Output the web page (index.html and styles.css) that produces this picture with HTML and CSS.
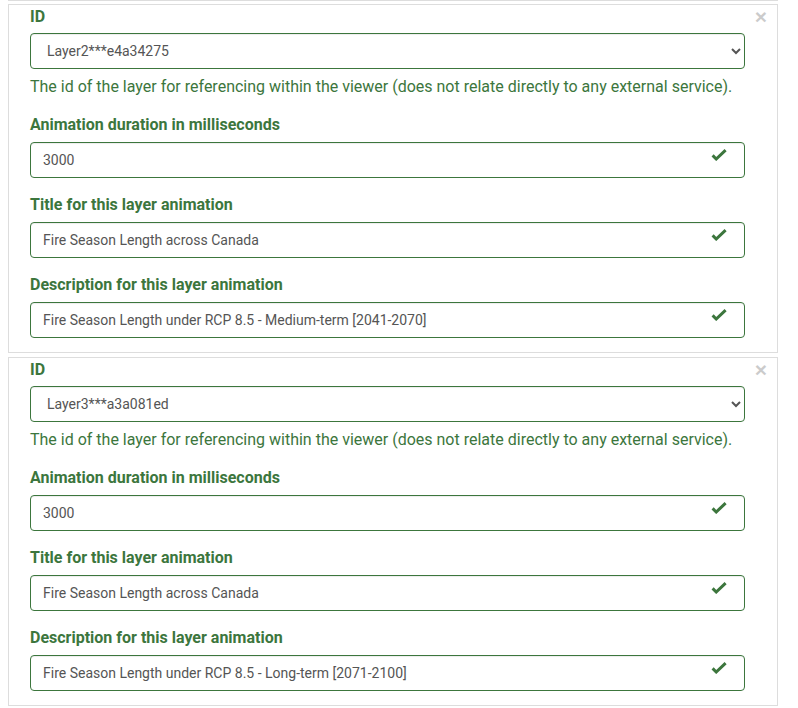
FILE: index.html
```html
<!DOCTYPE html>
<html>
<head>
<meta charset="utf-8">
<link rel="stylesheet" href="styles.css">
</head>
<body>
<div class="list">
  <div class="prev"></div>

  <div class="panel">
    <span class="close">×</span>
    <div class="group first">
      <label class="lbl">ID</label>
      <select class="ctl sel"><option>Layer2***e4a34275</option></select>
      <p class="help">The id of the layer for referencing within the viewer (does not relate directly to any external service).</p>
    </div>
    <div class="group">
      <label class="lbl">Animation duration in milliseconds</label>
      <div class="field">
        <input class="ctl" type="text" value="3000">
        <svg class="ok" viewBox="0 0 16 12" width="16" height="12"><path d="M1.6 6.4 L5.2 10 L14.6 1.2" fill="none" stroke="#3c763d" stroke-width="3"/></svg>
      </div>
    </div>
    <div class="group">
      <label class="lbl">Title for this layer animation</label>
      <div class="field">
        <input class="ctl" type="text" value="Fire Season Length across Canada">
        <svg class="ok" viewBox="0 0 16 12" width="16" height="12"><path d="M1.6 6.4 L5.2 10 L14.6 1.2" fill="none" stroke="#3c763d" stroke-width="3"/></svg>
      </div>
    </div>
    <div class="group last">
      <label class="lbl">Description for this layer animation</label>
      <div class="field">
        <input class="ctl" type="text" value="Fire Season Length under RCP 8.5 - Medium-term [2041-2070]">
        <svg class="ok" viewBox="0 0 16 12" width="16" height="12"><path d="M1.6 6.4 L5.2 10 L14.6 1.2" fill="none" stroke="#3c763d" stroke-width="3"/></svg>
      </div>
    </div>
  </div>

  <div class="panel">
    <span class="close">×</span>
    <div class="group first">
      <label class="lbl">ID</label>
      <select class="ctl sel"><option>Layer3***a3a081ed</option></select>
      <p class="help">The id of the layer for referencing within the viewer (does not relate directly to any external service).</p>
    </div>
    <div class="group">
      <label class="lbl">Animation duration in milliseconds</label>
      <div class="field">
        <input class="ctl" type="text" value="3000">
        <svg class="ok" viewBox="0 0 16 12" width="16" height="12"><path d="M1.6 6.4 L5.2 10 L14.6 1.2" fill="none" stroke="#3c763d" stroke-width="3"/></svg>
      </div>
    </div>
    <div class="group">
      <label class="lbl">Title for this layer animation</label>
      <div class="field">
        <input class="ctl" type="text" value="Fire Season Length across Canada">
        <svg class="ok" viewBox="0 0 16 12" width="16" height="12"><path d="M1.6 6.4 L5.2 10 L14.6 1.2" fill="none" stroke="#3c763d" stroke-width="3"/></svg>
      </div>
    </div>
    <div class="group last">
      <label class="lbl">Description for this layer animation</label>
      <div class="field">
        <input class="ctl" type="text" value="Fire Season Length under RCP 8.5 - Long-term [2071-2100]">
        <svg class="ok" viewBox="0 0 16 12" width="16" height="12"><path d="M1.6 6.4 L5.2 10 L14.6 1.2" fill="none" stroke="#3c763d" stroke-width="3"/></svg>
      </div>
    </div>
  </div>
</div>
</body>
</html>
```
FILE: styles.css
```css
* { box-sizing: border-box; }
html, body {
  margin: 0;
  padding: 0;
  background: #fff;
  font-family: Roboto, "Liberation Sans", sans-serif;
}
.list {
  width: 778px;
  padding-left: 8px;
}
.prev {
  height: 1px;
  border-bottom: 1px solid #ddd;
  margin-bottom: 3px;
}
.panel {
  position: relative;
  border: 1px solid #ddd;
  padding: 1px 32px 14px 21px;
  margin-bottom: 4px;
  background: #fff;
}
.close {
  position: absolute;
  top: 1px;
  right: 10px;
  font-size: 21px;
  font-weight: bold;
  line-height: 21px;
  color: #000;
  opacity: 0.2;
  font-family: "Liberation Sans", Arial, sans-serif;
}
.group {
  display: flex;
  flex-direction: column;
  margin-bottom: 16px;
}
.group.last { margin-bottom: 0; }
.lbl {
  display: block;
  font-size: 16px;
  line-height: 22px;
  font-weight: bold;
  color: #3c763d;
  margin-bottom: 6px;
}
.group.first .lbl { margin-bottom: 5px; }
.field {
  position: relative;
}
.ctl {
  display: block;
  width: 100%;
  height: 36px;
  padding: 6px 12px;
  font-family: Roboto, "Liberation Sans", sans-serif;
  font-size: 14px;
  color: #555;
  background: #fff;
  border: 1px solid #3c763d;
  border-radius: 4px;
  box-shadow: inset 0 1px 1px rgba(0,0,0,.075);
  outline: none;
}
.help {
  margin: 8px 0 1px 0;
  font-size: 16px;
  line-height: 20px;
  color: #3c763d;
}
.ok {
  position: absolute;
  right: 18px;
  top: 7px;
}
```
